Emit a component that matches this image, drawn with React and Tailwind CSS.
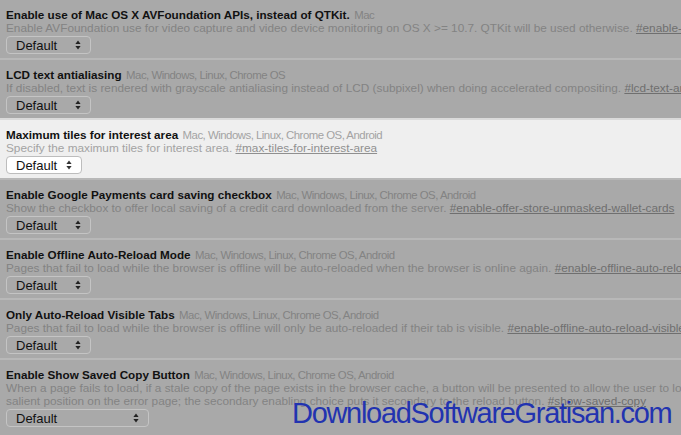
import React from 'react';

const flags = [
  {
    title: 'Enable use of Mac OS X AVFoundation APIs, instead of QTKit.',
    platforms: 'Mac',
    lines: ['Enable AVFoundation use for video capture and video device monitoring on OS X >= 10.7. QTKit will be used otherwise. '],
    tag: '#enable-avfoundation',
  },
  {
    title: 'LCD text antialiasing',
    platforms: 'Mac, Windows, Linux, Chrome OS',
    lines: ['If disabled, text is rendered with grayscale antialiasing instead of LCD (subpixel) when doing accelerated compositing. '],
    tag: '#lcd-text-antialiasing',
  },
  {
    title: 'Maximum tiles for interest area',
    platforms: 'Mac, Windows, Linux, Chrome OS, Android',
    lines: ['Specify the maximum tiles for interest area. '],
    tag: '#max-tiles-for-interest-area',
    active: true,
  },
  {
    title: 'Enable Google Payments card saving checkbox',
    platforms: 'Mac, Windows, Linux, Chrome OS, Android',
    lines: ['Show the checkbox to offer local saving of a credit card downloaded from the server. '],
    tag: '#enable-offer-store-unmasked-wallet-cards',
  },
  {
    title: 'Enable Offline Auto-Reload Mode',
    platforms: 'Mac, Windows, Linux, Chrome OS, Android',
    lines: ['Pages that fail to load while the browser is offline will be auto-reloaded when the browser is online again. '],
    tag: '#enable-offline-auto-reload',
  },
  {
    title: 'Only Auto-Reload Visible Tabs',
    platforms: 'Mac, Windows, Linux, Chrome OS, Android',
    lines: ['Pages that fail to load while the browser is offline will only be auto-reloaded if their tab is visible. '],
    tag: '#enable-offline-auto-reload-visible-only',
  },
  {
    title: 'Enable Show Saved Copy Button',
    platforms: 'Mac, Windows, Linux, Chrome OS, Android',
    lines: [
      'When a page fails to load, if a stale copy of the page exists in the browser cache, a button will be presented to allow the user to load that stale copy. The primary enabling choice puts the button in a',
      'salient position on the error page; the secondary enabling choice puts it secondary to the reload button. ',
    ],
    tag: '#show-saved-copy',
    wide: true,
  },
];

function Arrows({ active }) {
  const c = active ? '#333' : '#222';
  return (
    <svg width="6" height="10" viewBox="0 0 6 10">
      <path d="M3 0.5 L5.6 4 L0.4 4 Z" fill={c} />
      <path d="M3 9.5 L5.6 6 L0.4 6 Z" fill={c} />
    </svg>
  );
}

function Select({ active, wide }) {
  return (
    <div
      className={`mt-[1px] h-[18px] flex items-center justify-between pl-[9px] pr-[9px] rounded-[4px] border text-[13px] leading-none ${
        wide ? 'w-[143px]' : active ? 'w-[76px]' : 'w-[85px]'
      } ${active ? 'bg-white border-[#bdbdbd] text-[#111]' : 'bg-[#a9a9a9] border-[#c4c4c4] text-[#111]'}`}
    >
      <span>Default</span>
      <Arrows active={active} />
    </div>
  );
}

function Flag({ flag }) {
  const muted = flag.active ? 'text-[#a3a3a3]' : 'text-[#838383]';
  const link = flag.active ? 'text-[#8f8f8f]' : 'text-[#6f6f6f]';
  return (
    <div
      className={`pl-[6px] pt-[7px] overflow-hidden border-t-2 ${
        flag.wide ? 'h-[75px]' : 'h-[60px]'
      } ${flag.active ? 'bg-[#efefef] border-[#dadada]' : 'bg-[#a9a9a9] border-[#b8b8b8]'}`}
    >
      <div className="whitespace-nowrap leading-[14px]">
        <span className="font-bold text-[11.7px] text-[#111]">{flag.title}</span>{' '}
        <span className={`text-[11.4px] tracking-[-0.5px] ${muted}`}>{flag.platforms}</span>
      </div>
      {flag.lines.map((line, i) => (
        <div key={i} className={`whitespace-nowrap text-[11.8px] leading-[13px] ${muted}`}>
          {line}
          {i === flag.lines.length - 1 && <span className={`underline ${link}`}>{flag.tag}</span>}
        </div>
      ))}
      <Select active={flag.active} wide={flag.wide} />
    </div>
  );
}

export default function App() {
  return (
    <div
      className="relative w-[681px] h-[435px] overflow-hidden bg-[#a9a9a9]"
      style={{ fontFamily: '"Liberation Sans", Arial, sans-serif' }}
    >
      <div className="-mt-[2px]">
        {flags.map(f => (
          <Flag key={f.title} flag={f} />
        ))}
      </div>
      <div className="absolute left-[292px] top-[399px] text-[29px] leading-none tracking-[-1.3px] text-[#2233b0]">
        DownloadSoftwareGratisan.com
      </div>
    </div>
  );
}
